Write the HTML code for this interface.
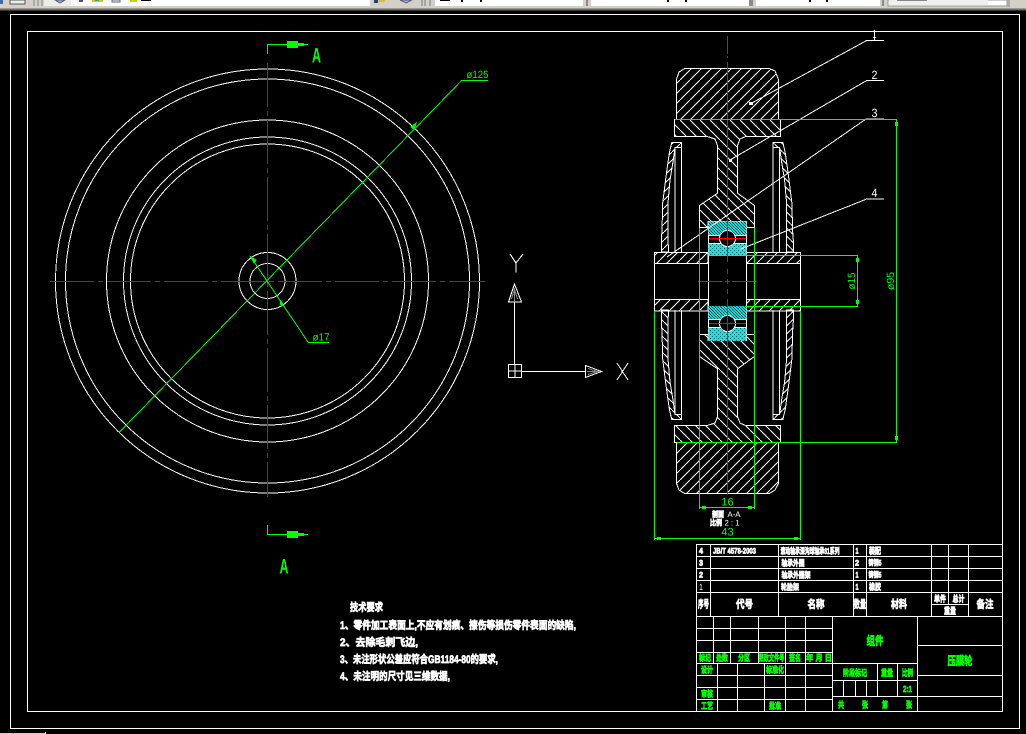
<!DOCTYPE html>
<html><head><meta charset="utf-8"><style>
html,body{margin:0;padding:0;background:#000;width:1026px;height:734px;overflow:hidden}
svg{display:block}
text{font-family:"Liberation Sans","Noto Sans CJK SC",sans-serif;text-rendering:geometricPrecision}
.c{font-weight:700;font-size:10px;stroke-width:.7px;text-anchor:middle;dominant-baseline:central}
.w{fill:#fff;stroke:#fff}.g{fill:#0f0;stroke:#0f0}
.d{font-size:10.5px;fill:#0f0;text-anchor:middle;dominant-baseline:central}
.l{font-weight:700;font-size:11px;fill:#fff;stroke:#fff;stroke-width:.7px;dominant-baseline:central}
.n{font-size:12px;fill:#fff;text-anchor:middle;dominant-baseline:central}
</style></head><body>
<svg width="1026" height="734" viewBox="0 0 1026 734" xmlns="http://www.w3.org/2000/svg" shape-rendering="crispEdges">
<defs>
<pattern id="hs" width="10" height="10" patternUnits="userSpaceOnUse"><path d="M-1 11L11 -1" stroke="#fff" fill="none"/></pattern>
<pattern id="hb" width="10" height="10" patternUnits="userSpaceOnUse"><path d="M-1 -1L11 11" stroke="#fff" fill="none"/></pattern>
<pattern id="hf" width="8" height="8" patternUnits="userSpaceOnUse"><path d="M-1 9L9 -1" stroke="#fff" fill="none"/></pattern>
<pattern id="cy" width="3" height="3" patternUnits="userSpaceOnUse"><rect width="3" height="3" fill="#00e0e0"/><rect width="1" height="1" fill="#002c2c"/><rect x="1" y="1" width="1" height="1" fill="#002c2c"/><rect x="2" y="2" width="1" height="1" fill="#004a4a"/></pattern>
<pattern id="cz" width="4" height="4" patternUnits="userSpaceOnUse"><rect width="4" height="4" fill="#00eaea"/><rect width="1" height="1" fill="#004a4a"/><rect x="2" y="2" width="1" height="1" fill="#004a4a"/></pattern>
<g id="shell">
<path d="M671.7 142.7H681.7V147.3H675L673.3 160L670 180L668 203L668.3 252H661.3V240L662 230L662.7 203L666 176.7L669.3 153Z" fill="url(#hf)" stroke="#fff"/>
<path d="M675 147.3V252M681.7 142.7V252" stroke="#fff" fill="none"/>
</g>
</defs>

<!-- toolbar -->
<rect width="1026" height="8" fill="#d4d0c8"/>
<rect y="8" width="1026" height="1" fill="#9c9a94"/><rect y="9" width="1026" height="1" fill="#6e6e6a"/><rect y="10" width="1026" height="1" fill="#333"/>
<rect x="44" width="27" height="6" fill="#eeece6"/><rect x="71" width="299" height="6" fill="#fff"/>
<rect x="0" width="3" height="4" fill="#3b6ea8"/>
<rect x="10" width="15" height="4" fill="#eee" stroke="#555"/>
<path d="M34 0V6M38 0V6M42 0V6" stroke="#888"/>
<path d="M55 0L60 3L65 0Z" fill="#9fb6d8" stroke="#557"/>
<rect x="79" width="4" height="2" fill="#556"/>
<rect x="92" width="11" height="2" fill="#e0c020"/><rect x="95" width="4" height="1" fill="#3a8"/>
<rect x="112" width="8" height="2" fill="#fff" stroke="#567"/>
<rect x="130" width="7" height="2" fill="#d8d000"/>
<rect x="141" width="10" height="1" fill="#000"/>
<rect x="373" width="47" height="6" fill="#d4d0c8"/>
<rect x="374" width="4" height="3" fill="#246"/><rect x="379" width="6" height="2" fill="#e0c020"/>
<path d="M400 0L406 3L412 0Z" fill="#9fb6d8" stroke="#557"/>
<path d="M422 0V6M425 0V6M430 0V6" stroke="#777"/>
<rect x="435" width="148" height="6" fill="#fff"/><rect x="591" width="158" height="6" fill="#fff"/><rect x="756" width="124" height="6" fill="#fff"/>
<path d="M587 0V6M750 0V6M752 0V6M883 0V6" stroke="#444"/>
<rect x="440" width="10" height="1" fill="#000"/><rect x="461" width="2" height="2" fill="#000"/><rect x="480" width="2" height="2" fill="#000"/>
<rect x="667" width="2" height="2" fill="#000"/><rect x="685" width="2" height="2" fill="#000"/><rect x="809" width="2" height="2" fill="#000"/><rect x="826" width="2" height="2" fill="#000"/>
<rect x="888" width="119" height="6" fill="#fff" stroke="#999"/><rect x="889" width="99" height="5" fill="#efefef"/>
<rect x="897" width="30" height="1" fill="#888"/>
<rect x="1010" width="16" height="8" fill="#d4d0c8"/>
<rect x="1007" width="3" height="7" fill="#aaa"/>

<!-- frames -->
<rect x="10.5" y="14.5" width="1009" height="714" fill="none" stroke="#fff"/>
<rect x="27.5" y="31.5" width="975" height="680" fill="none" stroke="#fff"/>
<rect x="0" y="733" width="45" height="1" fill="#ccc"/><rect x="45" y="732" width="1" height="2" fill="#fff"/>

<!-- left view -->
<g fill="none" stroke="#fff">
<circle cx="267.5" cy="281" r="212"/><circle cx="267.5" cy="281" r="202"/>
<circle cx="267.5" cy="281" r="161"/><circle cx="267.5" cy="281" r="144"/><circle cx="267.5" cy="281" r="137"/>
<circle cx="267.5" cy="281" r="28.5"/><circle cx="267.5" cy="281" r="17.5"/>
</g>
<path d="M50 281.5H485" stroke="#e00" stroke-dasharray="44 4 5 4" fill="none"/>
<path d="M267.5 63V497" stroke="#e00" stroke-dasharray="44 4 5 4" fill="none"/>
<path d="M488 80.5H461.7L119 432.5" stroke="#0f0" fill="none"/>
<path d="M250.7 256.7L308.3 342.5H329" stroke="#0f0" fill="none"/>
<path d="M250.7 256.7L256 260L254 263ZM280 300L283 304L281 306Z" fill="#0f0" stroke="#0f0"/>
<path d="M411 127l5 -4l-2 6z" fill="#0f0" stroke="#0f0"/>
<text class="d" x="477.5" y="75" textLength="22" lengthAdjust="spacingAndGlyphs">ø125</text>
<text class="d" x="321" y="337.5" textLength="17" lengthAdjust="spacingAndGlyphs">ø17</text>

<!-- section arrows -->
<g fill="#0f0" stroke="none">
<path d="M267 44h41v1h-41zM267 44h1v10h-1z"/><rect x="287" y="41" width="11" height="7"/><rect x="298" y="43" width="6" height="3"/>
<path d="M267 534h41v1h-41zM267 525h1v10h-1z"/><rect x="287" y="531" width="11" height="7"/><rect x="298" y="533" width="6" height="3"/>
</g>
<text x="316.5" y="56" class="c g" style="font-size:21px;stroke-width:0" textLength="9" lengthAdjust="spacingAndGlyphs">A</text>
<text x="284" y="567" class="c g" style="font-size:21px;stroke-width:0" textLength="9" lengthAdjust="spacingAndGlyphs">A</text>

<!-- UCS -->
<g fill="none" stroke="#fff">
<rect x="508.5" y="364.5" width="13" height="13"/><path d="M515 364.5V377.5M508.5 371H521.5M522 371.5H585M514.5 302V364"/>
<path d="M508.5 302H521.5L514.5 284ZM585.5 365.5V377.5L601.5 371.5Z"/>
<path d="M514.5 288V301M587 371.5H600M511.5 299L514.5 289M517.5 299L514.5 289M588 368.5L598 371.5M588 374.5L598 371.5" stroke="#888"/>
<path d="M510 254L516 263L523 254M516 263V272.5M617 363L628 380M628 363L617 380"/>
</g>

<!-- section view -->
<g stroke="#fff">
<path d="M685 68.3H769L775 71L778.7 80V119.3H676.3V80L679 72Z" fill="url(#hs)"/>
<path d="M676.3 442.7H778.7V483L775 490L769 493.7H685L679 490L676.3 483Z" fill="url(#hs)"/>
<path d="M674.3 119.3H780.7V136.7H745L740 139L737.7 145V193.3L754.7 205.7V227.3H746.7V221.3H708V227.3H699.3V205.7L717.3 193.3V145L715 139L708 136.7H674.3Z" fill="url(#hb)"/>
<path d="M674.3 442.7H780.7V425.3H745L740 423L737.7 417V368.7L754.7 356.3V334.7H746.7V340.7H708V334.7H699.3V356.3L717.3 368.7V417L715 423L708 425.3H674.3Z" fill="url(#hb)"/>
<use href="#shell"/>
<use href="#shell" transform="matrix(-1 0 0 1 1454.6 0)"/>
<use href="#shell" transform="matrix(1 0 0 -1 0 562)"/>
<use href="#shell" transform="matrix(-1 0 0 -1 1454.6 562)"/>
<rect x="654.5" y="252.5" width="53.5" height="11" fill="url(#hs)"/>
<rect x="654.5" y="299.5" width="53.5" height="11.5" fill="url(#hs)"/>
<rect x="746.7" y="252.5" width="54" height="11" fill="url(#hs)"/>
<rect x="746.7" y="299.5" width="54" height="11.5" fill="url(#hs)"/>
<path d="M654.5 252V311M800.5 252V311M708.5 221V341M746.5 221V341" fill="none"/>
<rect x="708.5" y="221.5" width="38" height="13.5" fill="url(#cy)" stroke="none"/>
<rect x="708.5" y="243" width="38" height="13" fill="url(#cz)" stroke="none"/>
<rect x="708.5" y="306" width="38" height="13.5" fill="url(#cy)" stroke="none"/>
<rect x="708.5" y="327.5" width="38" height="13.5" fill="url(#cz)" stroke="none"/>
<path d="M708 235.5H747M708 243.5H747M708 319.5H747M708 327.5H747" fill="none"/>
<circle cx="727.5" cy="238.5" r="8" fill="#000"/>
<circle cx="727.5" cy="323.5" r="8" fill="#000"/>
</g>
<path d="M727.5 36V54M727.5 56V58M727.5 62V262M727.5 269V274M727.5 279V284M727.5 289V294M727.5 299V495" stroke="#f00" fill="none"/>
<path d="M698 281.5H722.7M725 281.5H730M732 281.5H756.7" stroke="#f00" fill="none"/>
<path d="M709 238.5H746M709 323.5H746" stroke="#f00" fill="none"/>

<!-- leaders -->
<g fill="none" stroke="#fff">
<path d="M750 104L866.7 40.5H884M730 160L866.7 80.5H884M667 257L866 119H884M740 249.3L866.7 199H884"/>
<path d="M874.5 30V40"/>
</g>
<path d="M749 102h4v3h-4zM729 159h3v3h-3z" fill="#fff"/>
<text class="n" x="874.5" y="34" textLength="4" lengthAdjust="spacingAndGlyphs">1</text>
<text class="n" x="874.5" y="75" textLength="6" lengthAdjust="spacingAndGlyphs">2</text>
<text class="n" x="874.5" y="113" textLength="6" lengthAdjust="spacingAndGlyphs">3</text>
<text class="n" x="874.5" y="193" textLength="6" lengthAdjust="spacingAndGlyphs">4</text>

<!-- dims -->
<g fill="none" stroke="#0f0">
<path d="M699.5 228V509M754.5 228V509M699 507.5H755M654.5 311V540M800.5 311V540M654 538.5H801"/>
<path d="M746 255.5H858M746 306.5H858M857.5 255V307M675 119.5H897M677 442.5H897M896.5 119V443"/>
</g>
<g fill="#0f0">
<rect x="702" y="506" width="4" height="3"/><rect x="748" y="506" width="4" height="3"/>
<rect x="657" y="537" width="4" height="3"/><rect x="794" y="537" width="4" height="3"/>
<rect x="856" y="258" width="3" height="4"/><rect x="856" y="300" width="3" height="4"/>
<rect x="895" y="122" width="3" height="4"/><rect x="895" y="436" width="3" height="4"/>
</g>
<text class="d" x="727.5" y="502.5" style="font-size:11px">16</text>
<text class="d" x="727.5" y="532.5" style="font-size:11px">43</text>
<text class="d" transform="translate(852 281) rotate(-90)" textLength="17" lengthAdjust="spacingAndGlyphs">ø15</text>
<text class="d" transform="translate(891 281) rotate(-90)" textLength="18" lengthAdjust="spacingAndGlyphs">ø95</text>
<text class="c w" x="718" y="514.5" style="font-size:8px" textLength="12" lengthAdjust="spacingAndGlyphs">剖面</text>
<text class="n" x="734" y="514.5" style="font-size:8px" textLength="13" lengthAdjust="spacingAndGlyphs">A-A</text>
<text class="c w" x="716" y="523" style="font-size:8px" textLength="12" lengthAdjust="spacingAndGlyphs">比例</text>
<text class="n" x="732" y="523" style="font-size:8px" textLength="15" lengthAdjust="spacingAndGlyphs">2 : 1</text>

<!-- tech requirements -->
<text class="l" x="350" y="608" textLength="33" lengthAdjust="spacingAndGlyphs">技术要求</text>
<text class="l" x="340" y="626" textLength="236" lengthAdjust="spacingAndGlyphs">1、零件加工表面上,不应有划痕、擦伤等损伤零件表面的缺陷,</text>
<text class="l" x="340" y="643" textLength="78" lengthAdjust="spacingAndGlyphs">2、去除毛刺飞边,</text>
<text class="l" x="340" y="660" textLength="158" lengthAdjust="spacingAndGlyphs">3、未注形状公差应符合GB1184-80的要求,</text>
<text class="l" x="340" y="677" textLength="110" lengthAdjust="spacingAndGlyphs">4、未注明的尺寸见三维数据,</text>

<!-- title block -->
<g fill="none" stroke="#fff">
<path d="M696.5 544.5H1002.5M696.5 556.5H1002.5M696.5 568.5H1002.5M696.5 580.5H1002.5M696.5 592.5H1002.5M696.5 616.5H1002.5M931 604.5H968"/>
<path d="M696.5 544V712M710.5 544V616M778.5 544V616M853.5 544V616M866.5 544V616M931.5 544V616M948.5 544V604M968.5 544V616"/>
<path d="M696.5 628.5H832M696.5 640.5H832M696.5 652.5H832M696.5 663.5H917M696.5 675.5H832M696.5 687.5H832M696.5 699.5H832"/>
<path d="M713.5 616V663M730.5 616V663M758.5 616V663M717.5 663V711M737.5 663V711M764.5 663V711M785.5 616V711M805.5 616V711M832.5 616V711"/>
<path d="M832 680.5H917M832 696.5H1002M917 645.5H1002M917 675.5H1002M917.5 616V711M877.5 663V696M897.5 663V696M843.5 680V696M855.5 680V696M866.5 680V696"/>
</g>
<g>
<text class="c w" x="701" y="551" style="font-size:8px" textLength="4" lengthAdjust="spacingAndGlyphs">4</text>
<text class="c w" x="734.5" y="551" style="font-size:8px" textLength="43" lengthAdjust="spacingAndGlyphs">JB/T 4578-2003</text>
<text class="c w" x="810" y="551" style="font-size:8.5px" textLength="59" lengthAdjust="spacingAndGlyphs">滚动轴承深沟球轴承61系列</text>
<text class="c w" x="857" y="551" style="font-size:8px" textLength="3" lengthAdjust="spacingAndGlyphs">1</text>
<text class="c w" x="875" y="551" style="font-size:9px" textLength="12" lengthAdjust="spacingAndGlyphs">装配</text>
<text class="c w" x="701" y="563" style="font-size:8px" textLength="4" lengthAdjust="spacingAndGlyphs">3</text>
<text class="c w" x="793" y="563" style="font-size:8.5px" textLength="23" lengthAdjust="spacingAndGlyphs">轴承外圈</text>
<text class="c w" x="857" y="563" style="font-size:8px" textLength="4" lengthAdjust="spacingAndGlyphs">2</text>
<text class="c w" x="875" y="563" style="font-size:8px" textLength="13" lengthAdjust="spacingAndGlyphs">铸钢5</text>
<text class="c w" x="701" y="575" style="font-size:8px" textLength="4" lengthAdjust="spacingAndGlyphs">2</text>
<text class="c w" x="796" y="575" style="font-size:8.5px" textLength="29" lengthAdjust="spacingAndGlyphs">轴承外圈架</text>
<text class="c w" x="857" y="575" style="font-size:8px" textLength="3" lengthAdjust="spacingAndGlyphs">1</text>
<text class="c w" x="875" y="575" style="font-size:8px" textLength="13" lengthAdjust="spacingAndGlyphs">铸钢5</text>
<text class="n" x="701" y="587" style="font-size:9px" textLength="4" lengthAdjust="spacingAndGlyphs">1</text>
<text class="c w" x="790" y="587" style="font-size:8.5px" textLength="18" lengthAdjust="spacingAndGlyphs">轮胎架</text>
<text class="c w" x="857" y="587" style="font-size:8px" textLength="3" lengthAdjust="spacingAndGlyphs">1</text>
<text class="c w" x="875" y="587" style="font-size:9px" textLength="12" lengthAdjust="spacingAndGlyphs">橡胶</text>
<text class="c w" x="703.5" y="605" style="font-size:11px" textLength="11" lengthAdjust="spacingAndGlyphs">序号</text>
<text class="c w" x="744.5" y="605" style="font-size:11px" textLength="17" lengthAdjust="spacingAndGlyphs">代号</text>
<text class="c w" x="816" y="605" style="font-size:11px" textLength="17" lengthAdjust="spacingAndGlyphs">名称</text>
<text class="c w" x="860" y="605" style="font-size:11px" textLength="12" lengthAdjust="spacingAndGlyphs">数量</text>
<text class="c w" x="899" y="605" style="font-size:11px" textLength="16" lengthAdjust="spacingAndGlyphs">材料</text>
<text class="c w" x="940" y="599" style="font-size:9px" textLength="12" lengthAdjust="spacingAndGlyphs">单件</text>
<text class="c w" x="958.5" y="599" style="font-size:9px" textLength="12" lengthAdjust="spacingAndGlyphs">总计</text>
<text class="c w" x="950" y="611" style="font-size:9px" textLength="12" lengthAdjust="spacingAndGlyphs">重量</text>
<text class="c w" x="985" y="605" style="font-size:11px" textLength="17" lengthAdjust="spacingAndGlyphs">备注</text>
</g>
<g>
<text class="c g" x="705" y="658" style="font-size:9px" textLength="12" lengthAdjust="spacingAndGlyphs">标记</text>
<text class="c g" x="722" y="658" style="font-size:9px" textLength="12" lengthAdjust="spacingAndGlyphs">处数</text>
<text class="c g" x="744" y="658" style="font-size:9px" textLength="12" lengthAdjust="spacingAndGlyphs">分区</text>
<text class="c g" x="771.5" y="658" style="font-size:9px" textLength="26" lengthAdjust="spacingAndGlyphs">更改文件号</text>
<text class="c g" x="795" y="658" style="font-size:9px" textLength="12" lengthAdjust="spacingAndGlyphs">签名</text>
<text class="c g" x="819" y="658" style="font-size:9px" textLength="26" lengthAdjust="spacingAndGlyphs">年 月 日</text>
<text class="c g" x="707" y="670" style="font-size:9px" textLength="12" lengthAdjust="spacingAndGlyphs">设计</text>
<text class="c g" x="775" y="670" style="font-size:9px" textLength="18" lengthAdjust="spacingAndGlyphs">标准化</text>
<text class="c g" x="707" y="694" style="font-size:9px" textLength="12" lengthAdjust="spacingAndGlyphs">审核</text>
<text class="c g" x="707" y="706" style="font-size:9px" textLength="12" lengthAdjust="spacingAndGlyphs">工艺</text>
<text class="c g" x="775" y="706" style="font-size:9px" textLength="12" lengthAdjust="spacingAndGlyphs">批准</text>
<text class="c g" x="855" y="673" style="font-size:9px" textLength="24" lengthAdjust="spacingAndGlyphs">阶段标记</text>
<text class="c g" x="887" y="673" style="font-size:9px" textLength="12" lengthAdjust="spacingAndGlyphs">重量</text>
<text class="c g" x="907.5" y="673" style="font-size:9px" textLength="11" lengthAdjust="spacingAndGlyphs">比例</text>
<text class="c g" x="907.5" y="689" style="font-size:9px" textLength="9" lengthAdjust="spacingAndGlyphs">2:1</text>
<text class="c g" x="841" y="705" style="font-size:9px" textLength="6" lengthAdjust="spacingAndGlyphs">共</text>
<text class="c g" x="865" y="705" style="font-size:9px" textLength="6" lengthAdjust="spacingAndGlyphs">张</text>
<text class="c g" x="885" y="705" style="font-size:9px" textLength="6" lengthAdjust="spacingAndGlyphs">第</text>
<text class="c g" x="909" y="705" style="font-size:9px" textLength="6" lengthAdjust="spacingAndGlyphs">张</text>
<text class="c g" x="875" y="641" style="font-size:12px" textLength="17" lengthAdjust="spacingAndGlyphs">组件</text>
<text class="c g" x="960" y="661" style="font-size:12px" textLength="25" lengthAdjust="spacingAndGlyphs">压膜轮</text>
</g>
</svg>
</body></html>
